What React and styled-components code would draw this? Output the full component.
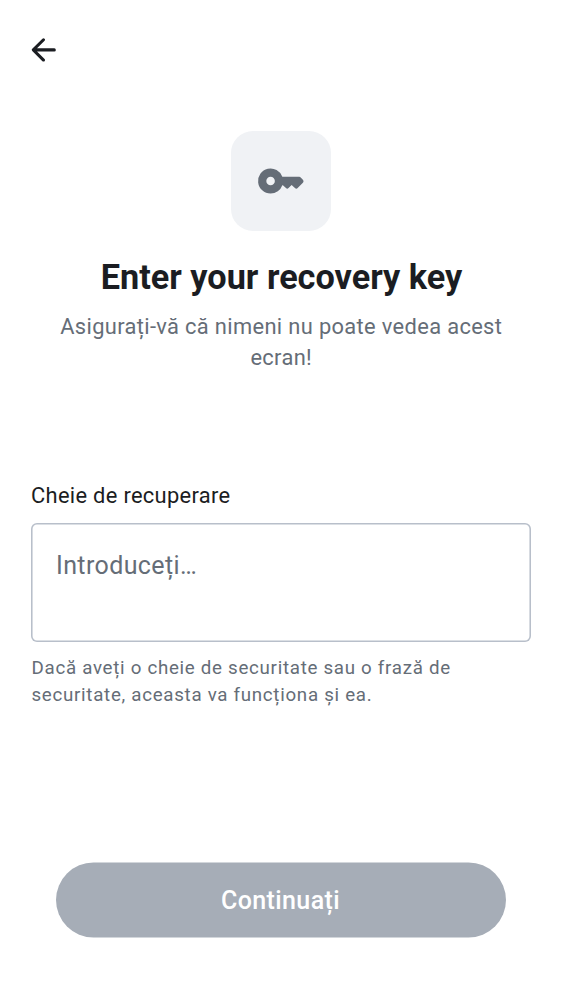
import React from 'react';
import styled, { createGlobalStyle } from 'styled-components';

const Global = createGlobalStyle`
  * { box-sizing: border-box; }
  body { margin: 0; background: #fff; font-family: Roboto, sans-serif; }
`;
const Screen = styled.main`
  height: 1000px;
  display: flex;
  flex-direction: column;
  background: #fff;
  color: #1b1d22;
  overflow: hidden;
`;
const TopBar = styled.header`
  height: 100px;
  padding: 0 25px 1px;
  display: flex;
  align-items: center;
  flex: none;
`;
const BackButton = styled.button`
  border: 0;
  padding: 0;
  width: 37px;
  height: 37px;
  background: none;
  color: inherit;
  svg { display: block; }
`;
const Hero = styled.section`
  display: flex;
  flex-direction: column;
  align-items: center;
  padding: 31px 50px 0;
  height: 373px;
  text-align: center;
`;
const IconTile = styled.div`
  width: 100px;
  height: 100px;
  border-radius: 22px;
  background: #f0f2f5;
  color: #656d77;
  display: grid;
  place-items: center;
`;
const Title = styled.h1`
  margin: 25px 0 0;
  padding-left: 1px;
  font-size: 34.25px;
  line-height: 43px;
  font-weight: 700;
  white-space: nowrap;
`;
const Subtitle = styled.p`
  margin: 12px 0 0;
  padding-left: 0.5px;
  font-size: 21.86px;
  line-height: 31px;
  letter-spacing: 0.35px;
  color: #656d77;
`;
const Field = styled.section`
  padding: 7px 31px 0;
  display: flex;
  flex-direction: column;
`;
const Label = styled.label`
  font-size: 21.86px;
  line-height: 31px;
  letter-spacing: 0.32px;
`;
const KeyInput = styled.div`
  margin-top: 12px;
  height: 119px;
  border-radius: 6px;
  box-shadow: inset 0 0 0 1.56px #b8bfca;
  padding: 24px 25px;
  font-size: 25px;
  line-height: 37px;
  letter-spacing: 0.38px;
  color: #656d77;
`;
const Hint = styled.p`
  margin: 13px 0 0;
  padding-left: 0.5px;
  font-size: 18.73px;
  line-height: 27px;
  letter-spacing: 0.71px;
  color: #656d77;
`;
const Footer = styled.footer`
  margin-top: auto;
  padding: 0 56px 62px;
`;
const Continue = styled.button`
  display: block;
  width: 100%;
  height: 75px;
  border: 0;
  border-radius: 38px;
  padding: 0 1px 0 0;
  transform: translateY(-0.5px);
  background: #a6adb7;
  color: #fff;
  font: 500 25px/37px Roboto, sans-serif;
  letter-spacing: 0.38px;
`;

export default function App() {
  return (
    <>
      <Global />
      <Screen>
        <TopBar>
          <BackButton aria-label="Înapoi">
            <svg width="37" height="37" viewBox="0 -0.25 24 24" fill="currentColor">
              <path d="m7.8 13 4.9 4.9q.3.3.3.7 0 .4-.3.7-.3.3-.7.3-.4 0-.7-.3l-6.6-6.6a.95.95 0 0 1 0-1.4l6.6-6.6q.3-.3.7-.3.4 0 .7.3.3.3.3.7 0 .4-.3.7L7.8 11H19a1 1 0 0 1 0 2Z" />
            </svg>
          </BackButton>
        </TopBar>
        <Hero>
          <IconTile>
            <svg width="50" height="50" viewBox="0 0 24 24" fill="currentColor">
              <path fillRule="evenodd" d="M7 18a6 6 0 1 1 5.65-8h8.1q.42 0 .7.3l1.05 1.15q.3.3.3.65 0 .4-.3.7l-2.5 2.6q-.3.3-.65.3-.35 0-.65-.3L17.1 13.9l-1.5 1.5q-.3.3-.6.3-.3 0-.6-.3l-1.5-1.4h-.25A6 6 0 0 1 7 18m0-3.95a2.05 2.05 0 1 0 0-4.1 2.05 2.05 0 0 0 0 4.1" />
            </svg>
          </IconTile>
          <Title>Enter your recovery key</Title>
          <Subtitle>Asigurați-vă că nimeni nu poate vedea acest ecran!</Subtitle>
        </Hero>
        <Field>
          <Label>Cheie de recuperare</Label>
          <KeyInput>Introduceți…</KeyInput>
          <Hint>Dacă aveți o cheie de securitate sau o frază de securitate, aceasta va funcționa și ea.</Hint>
        </Field>
        <Footer>
          <Continue>Continuați</Continue>
        </Footer>
      </Screen>
    </>
  );
}
